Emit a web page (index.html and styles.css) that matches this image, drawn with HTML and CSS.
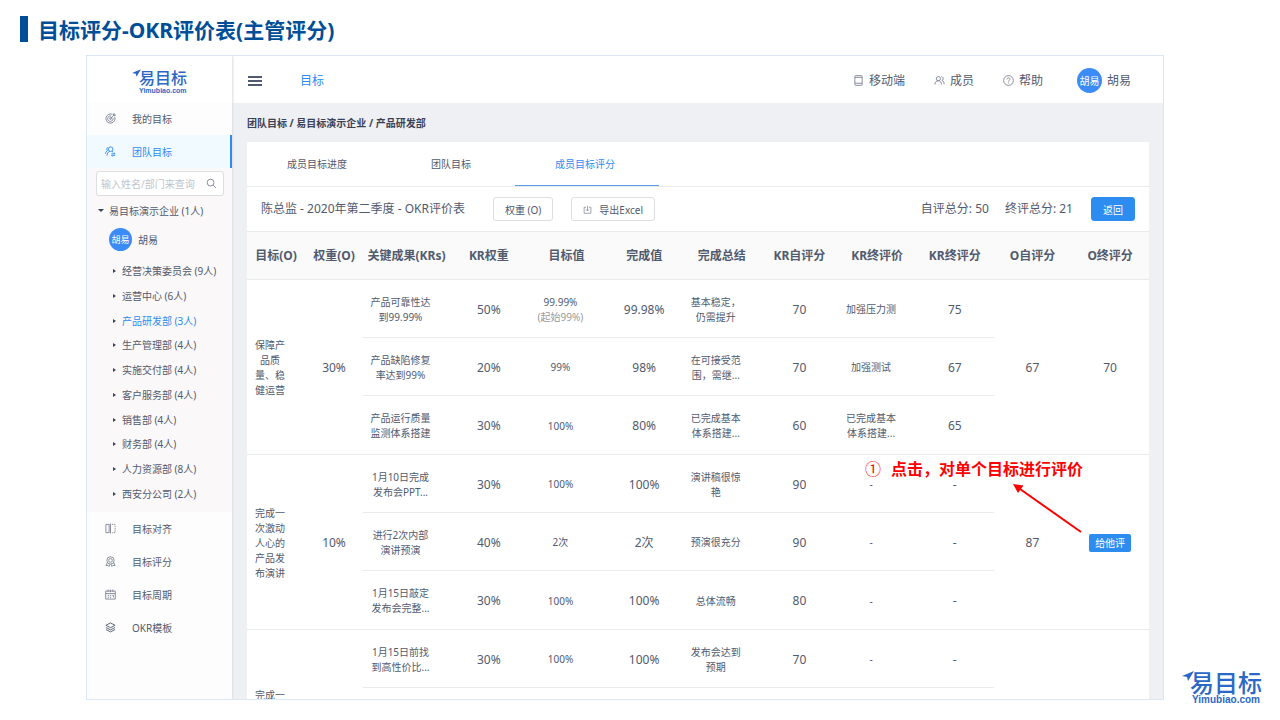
FILE: index.html
```html
<!DOCTYPE html>
<html lang="zh-CN">
<head>
    <meta charset="UTF-8">
    <meta name="viewport" content="width=device-width, initial-scale=1.0">
    <title>目标评分-OKR评价表</title>
    <link rel="stylesheet" href="styles.css">
</head>
<body>
    <h1 class="slide-title">目标评分-OKR评价表(主管评分)</h1>

    <div class="app">
        <aside class="sidebar">
            <div class="sidebar-logo">
                <div class="logo">
                    <svg class="logo-plane" viewBox="0 0 12 10"><path d="M0 5L12 0L6 10L5 6Z"/></svg>
                    <span class="logo-name">易目标</span>
                    <span class="logo-site">Yimubiao.com</span>
                </div>
            </div>
            <nav class="menu">
                <a class="menu-item" href="#">
                    <svg class="icon" viewBox="0 0 12 12"><path d="M10.6 4.2A5 5 0 1 1 8 1.5M8.7 5.2A3 3 0 1 1 6.8 3.3M6 6L9.2 2.8M9.2 2.8V1L10 .6V2H11.4L11 2.8Z"/><circle cx="6" cy="6" r="1"/></svg>
                    我的目标
                </a>
                <a class="menu-item active" href="#">
                    <svg class="icon" viewBox="0 0 12 12"><circle cx="6.2" cy="3.5" r="2.5"/><path d="M2.2 10.5C2.4 8 3.4 6.4 5 5.8M.6 8.5C.8 6.8 1.4 5.8 2.6 5.2C1.6 4 1.8 2 3.4 1.4M7.6 5.8L9 7M7 8.5H11L9.8 7.4M11 10.2H7L8.2 11.2"/></svg>
                    团队目标
                </a>
            </nav>
            <div class="team">
                <div class="search">
                    <input type="text" placeholder="输入姓名/部门来查询" aria-label="输入姓名/部门来查询">
                    <svg class="icon" viewBox="0 0 12 12"><circle cx="5" cy="5" r="3.7"/><path d="M7.8 7.8L11 11"/></svg>
                </div>
                <div class="tree-root"><span class="caret caret-down"></span>易目标演示企业 (1人)</div>
                <div class="tree-user"><span class="avatar avatar-small">胡易</span>胡易</div>
                <ul class="tree">
                    <li><span class="caret"></span>经营决策委员会 (9人)</li>
                    <li><span class="caret"></span>运营中心 (6人)</li>
                    <li class="current"><span class="caret"></span>产品研发部 (3人)</li>
                    <li><span class="caret"></span>生产管理部 (4人)</li>
                    <li><span class="caret"></span>实施交付部 (4人)</li>
                    <li><span class="caret"></span>客户服务部 (4人)</li>
                    <li><span class="caret"></span>销售部 (4人)</li>
                    <li><span class="caret"></span>财务部 (4人)</li>
                    <li><span class="caret"></span>人力资源部 (8人)</li>
                    <li><span class="caret"></span>西安分公司 (2人)</li>
                </ul>
            </div>
            <nav class="menu">
                <a class="menu-item" href="#">
                    <svg class="icon" viewBox="0 0 12 12"><path d="M4.5 1.5H1V10.5H4.5M6 .5V11.5M4.5 1.5V10.5"/><path stroke-dasharray="1.5 1" d="M7.5 1.5H11V10.5H7.5"/></svg>
                    目标对齐
                </a>
                <a class="menu-item" href="#">
                    <svg class="icon" viewBox="0 0 12 12"><circle cx="6" cy="4.8" r="4"/><circle cx="6" cy="4.8" r="2"/><path d="M2.6 7L1 10.5L3.4 10.2L4.4 11.4L5.4 9M9.4 7L11 10.5L8.6 10.2L7.6 11.4L6.6 9"/></svg>
                    目标评分
                </a>
                <a class="menu-item" href="#">
                    <svg class="icon" viewBox="0 0 12 12"><path d="M.8 2.2H11.2V11H.8ZM.8 5H11.2M3.4 .6V3.4M6 .6V3.4M8.6 .6V3.4M3 7H4.4M5.4 7H6.8M3 9H4.4M5.4 9H6.8M8 7H9.2V9"/></svg>
                    目标周期
                </a>
                <a class="menu-item" href="#">
                    <svg class="icon icon-dark" viewBox="0 0 12 12"><path d="M6 1L11 3.6L6 6.2L1 3.6ZM1 6L6 8.6L11 6M1 8.2L6 10.8L11 8.2"/></svg>
                    OKR模板
                </a>
            </nav>
        </aside>

        <main class="main">
            <header class="topbar">
                <button class="menu-toggle" aria-label="菜单"><svg viewBox="0 0 14 10"><path d="M0 1H14M0 5H14M0 9H14"/></svg></button>
                <a class="topbar-current" href="#">目标</a>
                <nav class="topbar-links">
                    <a href="#"><svg class="icon" viewBox="0 0 12 12"><rect x="2" y=".7" width="8" height="10.6" rx="1"/><path d="M2 2.6H10M2 9H10"/></svg>移动端</a>
                    <a href="#"><svg class="icon" viewBox="0 0 12 12"><circle cx="4.8" cy="4" r="2.3"/><path d="M1 10.5C1 8 2.4 6.3 4.8 6.3S8 8 8.2 10.5M8 1.8C10.6 1.8 10.6 5.6 8.6 5.8C10.4 6.4 11 8 11 10"/></svg>成员</a>
                    <a href="#"><svg class="icon" viewBox="0 0 12 12"><circle cx="6" cy="6" r="5.3"/><path d="M4.4 4.8C4.4 2.6 7.6 2.6 7.6 4.6C7.6 5.8 6 5.8 6 7.2M6 8.3V9.2"/></svg>帮助</a>
                </nav>
                <a class="user" href="#"><span class="avatar">胡易</span>胡易</a>
            </header>

            <div class="breadcrumb">团队目标 / 易目标演示企业 / 产品研发部</div>

            <section class="card">
                <nav class="tabs">
                    <a href="#">成员目标进度</a>
                    <a href="#">团队目标</a>
                    <a class="active" href="#">成员目标评分</a>
                </nav>
                <div class="toolbar">
                    <h2>陈总监 - 2020年第二季度 - OKR评价表</h2>
                    <button class="btn">权重 (O)</button>
                    <button class="btn"><svg class="icon" viewBox="0 0 12 12"><path d="M4 3H1.5V11H10.5V3H8M6 1V8M4 6L6 8L8 6"/></svg>导出Excel</button>
                    <div class="totals">
                        <span>自评总分: 50</span>
                        <span>终评总分: 21</span>
                    </div>
                    <button class="btn btn-primary">返回</button>
                </div>
                <table class="scores">
                    <colgroup>
                        <col class="col-o">
                        <col class="col-o">
                        <col class="col-kr">
                        <col span="9">
                    </colgroup>
                    <thead>
                        <tr>
                            <th>目标(O)</th>
                            <th>权重(O)</th>
                            <th>关键成果(KRs)</th>
                            <th>KR权重</th>
                            <th>目标值</th>
                            <th>完成值</th>
                            <th>完成总结</th>
                            <th>KR自评分</th>
                            <th>KR终评价</th>
                            <th>KR终评分</th>
                            <th>O自评分</th>
                            <th>O终评分</th>
                        </tr>
                    </thead>
                    <tbody>
                        <tr>
                            <td class="text" rowspan="3">保障产品质量、稳健运营</td>
                            <td rowspan="3">30%</td>
                            <td class="text">产品可靠性达到99.99%</td>
                            <td>50%</td>
                            <td class="text">99.99% <span class="start">(起始99%)</span></td>
                            <td>99.98%</td>
                            <td class="text">基本稳定，仍需提升</td>
                            <td>70</td>
                            <td class="text">加强压力测</td>
                            <td>75</td>
                            <td rowspan="3">67</td>
                            <td rowspan="3">70</td>
                        </tr>
                        <tr>
                            <td class="text">产品缺陷修复率达到99%</td>
                            <td>20%</td>
                            <td class="text">99%</td>
                            <td>98%</td>
                            <td class="text">在可接受范围，需继...</td>
                            <td>70</td>
                            <td class="text">加强测试</td>
                            <td>67</td>
                        </tr>
                        <tr>
                            <td class="text">产品运行质量监测体系搭建</td>
                            <td>30%</td>
                            <td class="text">100%</td>
                            <td>80%</td>
                            <td class="text">已完成基本体系搭建...</td>
                            <td>60</td>
                            <td class="text">已完成基本体系搭建...</td>
                            <td>65</td>
                        </tr>
                    </tbody>
                    <tbody>
                        <tr>
                            <td class="text" rowspan="3">完成一次激动人心的产品发布演讲</td>
                            <td rowspan="3">10%</td>
                            <td class="text">1月10日完成发布会PPT...</td>
                            <td>30%</td>
                            <td class="text">100%</td>
                            <td>100%</td>
                            <td class="text">演讲稿很惊艳</td>
                            <td>90</td>
                            <td class="text">-</td>
                            <td>-</td>
                            <td rowspan="3">87</td>
                            <td rowspan="3"><button class="btn-rate">给他评</button></td>
                        </tr>
                        <tr>
                            <td class="text">进行2次内部演讲预演</td>
                            <td>40%</td>
                            <td class="text">2次</td>
                            <td>2次</td>
                            <td class="text">预演很充分</td>
                            <td>90</td>
                            <td class="text">-</td>
                            <td>-</td>
                        </tr>
                        <tr>
                            <td class="text">1月15日敲定发布会完整...</td>
                            <td>30%</td>
                            <td class="text">100%</td>
                            <td>100%</td>
                            <td class="text">总体流畅</td>
                            <td>80</td>
                            <td class="text">-</td>
                            <td>-</td>
                        </tr>
                    </tbody>
                    <tbody>
                        <tr>
                            <td class="text" rowspan="3">完成一次高性价比的采购</td>
                            <td rowspan="3"></td>
                            <td class="text">1月15日前找到高性价比...</td>
                            <td>30%</td>
                            <td class="text">100%</td>
                            <td>100%</td>
                            <td class="text">发布会达到预期</td>
                            <td>70</td>
                            <td class="text">-</td>
                            <td>-</td>
                            <td rowspan="3"></td>
                            <td rowspan="3"></td>
                        </tr>
                        <tr><td colspan="8"></td></tr>
                        <tr><td colspan="8"></td></tr>
                    </tbody>
                </table>
            </section>
        </main>

        <div class="callout">
            <p><span class="callout-number">①</span>点击，对单个目标进行评价</p>
            <svg class="callout-arrow" viewBox="0 0 70 50"><path class="line" d="M68 49L7 6"/><path class="head" d="M0 1L10.500 2.500L5 10Z"/></svg>
        </div>
    </div>

    <div class="logo logo-large">
        <svg class="logo-plane" viewBox="0 0 12 10"><path d="M0 5L12 0L6 10L5 6Z"/></svg>
        <span class="logo-name">易目标</span>
        <span class="logo-site">Yimubiao.com</span>
    </div>
</body>
</html>
```
FILE: styles.css
```css
* {
    box-sizing: border-box;
}

body {
    display: flex;
    flex-direction: column;
    height: 100vh;
    margin: 0;
    position: relative;
    overflow: hidden;
    background: #fff;
    color: #515a6e;
    font-family: "Noto Sans", "Noto Sans CJK SC", sans-serif;
    font-size: 12px;
    line-height: 16px;
}

a {
    color: inherit;
    text-decoration: none;
}

button,
input {
    font-family: inherit;
    color: inherit;
}

.slide-title {
    margin: 16px 20px 13px;
    padding: 2px 0 0 10px;
    border-left: 8px solid #004e98;
    color: #004e98;
    font-size: 21px;
    line-height: 24px;
}

.app {
    display: flex;
    flex: 1;
    min-height: 0;
    margin: 0 116px 20px 86px;
    position: relative;
    overflow: hidden;
    border: 1px solid #dbe7f4;
    background: #eff0f4;
}

.icon {
    width: 11px;
    height: 11px;
    flex: none;
    fill: none;
    stroke: #808695;
    stroke-width: 1;
}

.icon-dark {
    stroke: #515a6e;
}

/* logo */
.logo {
    display: flex;
    flex-direction: column;
    position: relative;
    color: #2b68c5;
}

.logo-plane {
    position: absolute;
    top: 0;
    left: -7px;
    width: 9px;
    height: 8px;
    fill: #2b68c5;
}

.logo-name {
    font-size: 16px;
    font-weight: 500;
    line-height: 18px;
}

.logo-site {
    font-family: "Liberation Sans", sans-serif;
    font-size: 7px;
    font-weight: bold;
    line-height: 7px;
}

.logo-large {
    position: absolute;
    right: 18px;
    bottom: 15px;
}

.logo-large .logo-plane {
    left: -8px;
    width: 12px;
    height: 10px;
}

.logo-large .logo-name {
    font-size: 24px;
    line-height: 24px;
}

.logo-large .logo-site {
    padding-left: 2px;
    font-size: 10px;
    line-height: 10px;
}

/* sidebar */
.sidebar {
    width: 145px;
    flex: none;
    background: #fdfdfd;
    font-size: 10px;
    box-shadow: 1px 0 2px #dcdee2;
    z-index: 1;
}

.sidebar-logo {
    display: flex;
    align-items: center;
    height: 46px;
    padding: 5px 0 0 52px;
    background: #fff;
}

.menu-item {
    display: flex;
    align-items: center;
    gap: 16px;
    height: 33px;
    padding-left: 18px;
}

.menu-item.active {
    background: #f0faff;
    border-right: 2px solid #2d8cf0;
    color: #2d8cf0;
}

.menu-item.active .icon {
    stroke: #2d8cf0;
}

.team {
    padding: 3px 8px 6px 9px;
    background: #faf8f9;
}

.search {
    display: flex;
    align-items: center;
    height: 25px;
    padding: 0 6px 0 4px;
    border: 1px solid #dcdee2;
    border-radius: 3px;
    background: #fff;
}

.search input {
    flex: 1;
    min-width: 0;
    padding: 0;
    border: 0;
    outline: 0;
    background: none;
    font-size: 10px;
}

.search input::placeholder {
    color: #c0c4cc;
}

.tree-root {
    display: flex;
    align-items: center;
    gap: 5px;
    height: 25px;
    margin: 2px 0 0 2px;
}

.tree-user {
    display: flex;
    align-items: center;
    gap: 6px;
    height: 33px;
    margin-left: 13px;
}

.tree {
    display: grid;
    grid-auto-rows: 1fr;
    height: 247px;
    margin: 3px 0 0 17px;
    padding: 0;
    list-style: none;
}

.tree li {
    display: flex;
    align-items: center;
    gap: 6px;
}

.tree .current {
    color: #2d8cf0;
}

.caret {
    border: 2px solid transparent;
    border-left: 3px solid #3b4256;
    border-right: 0;
}

.caret-down {
    border: 3px solid transparent;
    border-top-color: #3b4256;
    border-bottom: 0;
}

.avatar {
    display: flex;
    align-items: center;
    justify-content: center;
    width: 25px;
    height: 25px;
    border-radius: 50%;
    background: #3b8cf8;
    color: #fff;
    font-size: 10px;
}

.avatar-small {
    width: 23px;
    height: 23px;
    font-size: 9px;
}

/* main area */
.main {
    flex: 1;
    min-width: 0;
}

.topbar {
    display: flex;
    align-items: center;
    height: 47px;
    padding: 2px 32px 0 16px;
    background: #fff;
}

.menu-toggle {
    display: flex;
    padding: 0;
    border: 0;
    background: none;
}

.menu-toggle svg {
    width: 14px;
    height: 10px;
    stroke: #515a6e;
    stroke-width: 2;
}

.topbar-current {
    margin-left: 38px;
    color: #2d8cf0;
}

.topbar-links {
    display: flex;
    gap: 29px;
    margin: 0 34px 0 auto;
}

.topbar-links a,
.user {
    display: flex;
    align-items: center;
    gap: 5px;
}

.breadcrumb {
    padding: 12px 15px 11px;
    color: #3b4256;
    font-size: 10px;
    font-weight: bold;
}

.card {
    margin: 0 14px 0 15px;
    background: #fff;
}

.tabs {
    display: flex;
    height: 45px;
    border-bottom: 1px solid #e8eaec;
    font-size: 10px;
    line-height: 44px;
}

.tabs a {
    padding: 0 44px 0 40px;
}

.tabs .active {
    height: 44px;
    border-bottom: 1px solid #5a9df0;
    color: #2d8cf0;
}

.toolbar {
    display: flex;
    align-items: center;
    height: 44px;
    padding: 0 14px;
}

.toolbar h2 {
    margin: 0 10px 0 0;
    font-size: 12px;
    font-weight: normal;
}

.btn {
    display: flex;
    align-items: center;
    gap: 7px;
    height: 24px;
    margin-left: 18px;
    padding: 0 11px;
    border: 1px solid #dcdee2;
    border-radius: 3px;
    background: #fff;
    font-size: 10px;
}

.btn .icon {
    width: 9px;
    height: 9px;
}

.btn-primary {
    border-color: #2d8cf0;
    background: #2d8cf0;
    color: #fff;
}

.totals {
    display: flex;
    gap: 16px;
    margin-left: auto;
}

/* score table */
.scores {
    width: 100%;
    table-layout: fixed;
    border-collapse: separate;
    border-spacing: 0;
    text-align: center;
}

.col-o {
    width: 58px;
}

.col-kr {
    width: 87px;
}

.scores th {
    height: 49px;
    padding: 1px 0 0;
    border-top: 1px solid #e8eaec;
    border-bottom: 1px solid #e8eaec;
    background: #fafafa;
    white-space: nowrap;
}

.scores td {
    height: 58px;
    padding: 2px 0 0;
    border-bottom: 1px solid #e8eaec;
}

.scores tr:last-child td {
    height: 59px;
}

.scores .text {
    padding: 2px 19px 0 7px;
    font-size: 10px;
    line-height: 15px;
}

.start {
    display: block;
    margin: 0 -4px;
    color: #999;
    white-space: nowrap;
}

.btn-rate {
    height: 18px;
    padding: 0 6px;
    border: 0;
    border-radius: 2px;
    background: #2d8cf0;
    color: #fff;
    font-size: 10px;
    line-height: 18px;
}

/* step note over the table */
.callout {
    position: absolute;
    top: 403px;
    right: 80px;
    color: #f00;
    font-size: 16px;
    font-weight: bold;
    line-height: 20px;
}

.callout p {
    margin: 0;
}

.callout-number {
    margin-right: 10px;
    font-weight: normal;
}

.callout-arrow {
    display: block;
    width: 70px;
    height: 50px;
    margin: 4px 0 0 auto;
}

.callout-arrow .line {
    fill: none;
    stroke: #f00;
    stroke-width: 2;
}

.callout-arrow .head {
    fill: #f00;
}
```
